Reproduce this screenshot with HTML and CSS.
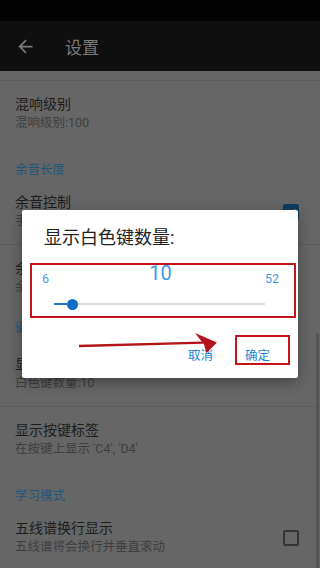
FILE: index.html
```html
<!DOCTYPE html>
<html>

<head>
    <meta charset="utf-8">
    <title>设置</title>
    <link rel="stylesheet" href="styles.css">
</head>

<body>
    <div class="screen">
        <div class="statusbar"></div>
        <div class="toolbar">
            <svg class="back" viewBox="0 0 24 24" width="21" height="21">
                <path d="M20 11H7.83l5.59-5.59L12 4l-8 8 8 8 1.41-1.41L7.83 13H20v-2z" fill="currentColor" />
            </svg>
            <span class="toolbar-title">设置</span>
        </div>

        <div class="prefs">
            <div class="prefs-edge"></div>

            <div class="pref">
                <div class="pref-text">
                    <div class="pref-title">混响级别</div>
                    <div class="pref-sub">混响级别:100</div>
                </div>
            </div>

            <div class="pref-header">余音长度</div>
            <div class="pref pref-divided">
                <div class="pref-text">
                    <div class="pref-title">余音控制</div>
                    <div class="pref-sub">手动控制余音长度</div>
                </div>
                <div class="check check-on">
                    <svg viewBox="0 0 16 16" width="16" height="16">
                        <path d="M3.5 8.5l3 3 6-6.5" fill="none" stroke="#5a6e7e" stroke-width="1.6" />
                    </svg>
                </div>
            </div>
            <div class="pref pref-short">
                <div class="pref-text">
                    <div class="pref-title">余音长度</div>
                    <div class="pref-sub">余音长度:100</div>
                </div>
            </div>

            <div class="pref-header pref-header-gap">键盘</div>
            <div class="pref pref-divided">
                <div class="pref-text">
                    <div class="pref-title">显示白色键数量</div>
                    <div class="pref-sub">白色键数量:10</div>
                </div>
            </div>
            <div class="pref">
                <div class="pref-text">
                    <div class="pref-title">显示按键标签</div>
                    <div class="pref-sub">在按键上显示 'C4', 'D4'</div>
                </div>
            </div>

            <div class="pref-header">学习模式</div>
            <div class="pref">
                <div class="pref-text">
                    <div class="pref-title">五线谱换行显示</div>
                    <div class="pref-sub">五线谱将会换行并垂直滚动</div>
                </div>
                <div class="check"></div>
            </div>
        </div>

        <div class="scrollbar"></div>

        <!-- number picker dialog -->
        <div class="dialog">
            <div class="dialog-title">显示白色键数量:</div>
            <div class="seek-values">
                <span class="seek-min">6</span>
                <span class="seek-current">10</span>
                <span class="seek-max">52</span>
            </div>
            <div class="seek">
                <div class="seek-fill"></div>
                <div class="seek-thumb"></div>
                <div class="seek-rest"></div>
            </div>
            <div class="dialog-buttons">
                <button class="dialog-btn">取消</button>
                <button class="dialog-btn">确定</button>
            </div>

            <div class="mark mark-seek"></div>
            <div class="mark mark-ok"></div>
            <svg class="mark-arrow" viewBox="0 0 150 30" width="150" height="30">
                <path d="M4 18L128 14.6" stroke="#b3141a" stroke-width="2.4" fill="none" />
                <polygon points="120,5 142,14.5 131.5,25 129,16.5" fill="#b3141a" />
            </svg>
        </div>
    </div>
</body>

</html>
```

FILE: styles.css
```css
* {
    box-sizing: border-box;
}

body {
    margin: 0;
    font-family: Roboto, "Noto Sans CJK SC", sans-serif;
    background: #666;
}

.screen {
    position: relative;
    width: 320px;
    height: 568px;
    overflow: hidden;
    background: #666;
}

.statusbar {
    height: 21px;
    background: #030303;
}

.toolbar {
    display: flex;
    align-items: center;
    height: 50px;
    background: #0f0f0f;
    padding-left: 15px;
}

.back {
    color: #7a7a7a;
}

.toolbar-title {
    margin-left: 29px;
    font-size: 17px;
    color: #7a7a7a;
}

.prefs-edge {
    height: 10px;
    border-bottom: 1px solid #5c5c5c;
}

.pref {
    display: flex;
    align-items: center;
    padding: 14px 21px 14px 15px;
}

.pref-divided {
    border-bottom: 1px solid #5c5c5c;
}

.pref-short {
    padding-bottom: 8px;
}

.pref-text {
    flex: 1;
    min-width: 0;
}

.pref-title {
    font-size: 14px;
    line-height: 19px;
    color: #1c1c1c;
}

.pref-sub {
    font-size: 12.5px;
    line-height: 18px;
    color: #3e3e3e;
    white-space: nowrap;
}

.pref-header {
    padding: 15px 15px 0;
    font-size: 12.5px;
    line-height: 18px;
    color: #1d5780;
}

.pref-header-gap {
    padding-bottom: 4px;
}

.check {
    width: 16px;
    height: 16px;
    border: 2px solid #353535;
    border-radius: 2px;
}

.check-on {
    border: none;
    background: #0e3b5e;
}

.check-on svg {
    display: block;
}

.scrollbar {
    position: absolute;
    right: 1px;
    top: 333px;
    width: 3px;
    height: 235px;
    background: #555;
}

/* dialog */
.dialog {
    position: absolute;
    left: 22px;
    top: 210px;
    width: 276px;
    height: 168px;
    background: #fff;
    border-radius: 2px;
    box-shadow: 0 4px 14px rgba(0, 0, 0, 0.35);
    padding-top: 16px;
}

.dialog-title {
    padding-left: 22px;
    font-size: 18px;
    line-height: 24px;
    color: #222;
}

.seek-values {
    display: grid;
    grid-template-columns: 1fr auto 1fr;
    align-items: start;
    margin-top: 11px;
    padding: 0 19px 0 20px;
    color: #3f9be8;
}

.seek-min,
.seek-max {
    margin-top: 10px;
    font-size: 12.5px;
    line-height: 16px;
}

.seek-max {
    justify-self: end;
}

.seek-current {
    font-size: 20px;
    line-height: 24px;
}

.seek {
    display: flex;
    align-items: center;
    height: 16px;
    margin: 9px 33px 0 32px;
}

.seek-fill {
    width: 13px;
    height: 2px;
    background: #1478cc;
}

.seek-thumb {
    width: 11px;
    height: 11px;
    border-radius: 50%;
    background: #0c6fc4;
}

.seek-rest {
    flex: 1;
    height: 2px;
    background: #dcdcdc;
}

.dialog-buttons {
    display: flex;
    justify-content: flex-end;
    gap: 16px;
    margin-top: 32px;
    padding-right: 20px;
}

.dialog-btn {
    padding: 0 8px;
    border: none;
    background: none;
    font-family: inherit;
    font-size: 12.5px;
    line-height: 24px;
    color: #1a86d6;
}

/* red annotation marks */
.mark {
    position: absolute;
    border: 2px solid #c3141b;
}

.mark-seek {
    left: 8px;
    top: 53px;
    width: 266px;
    height: 55px;
}

.mark-ok {
    left: 213px;
    top: 125px;
    width: 55px;
    height: 30px;
}

.mark-arrow {
    position: absolute;
    left: 53px;
    top: 118px;
}
```
